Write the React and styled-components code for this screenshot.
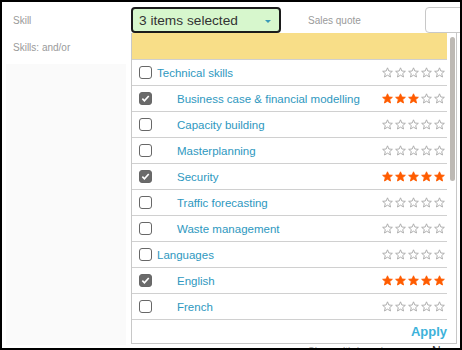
import React from 'react';
import styled, { createGlobalStyle } from 'styled-components';

const GlobalStyle = createGlobalStyle`
  body {
    margin: 0;
    background: #fff;
    font-family: "Liberation Sans", Arial, sans-serif;
  }
`;

const Frame = styled.div`
  width: 462px;
  height: 350px;
  box-sizing: border-box;
  border: 2px solid #000;
  padding: 5px 0 0 4px;
  display: flex;
  position: relative;
  overflow: hidden;
  background: #fff;
`;

const LeftCol = styled.div`
  width: 120px;
  flex-shrink: 0;
  display: flex;
  flex-direction: column;
  padding-bottom: 3px;
`;

const FieldLabel = styled.div`
  height: ${(p) => p.$h}px;
  display: flex;
  align-items: center;
  padding-left: 7px;
  font-size: 10px;
  color: #9a9a9a;
`;

const LeftPane = styled.div`
  flex: 1;
  margin-top: 3px;
  background: #fafafa;
`;

const Main = styled.div`
  flex: 1;
  min-width: 0;
  margin-left: 5px;
  display: flex;
  flex-direction: column;
`;

const TopRow = styled.div`
  display: flex;
  height: 26px;
`;

const ComboWrap = styled.div`
  position: relative;
  width: 150px;
  flex-shrink: 0;
`;

const Combo = styled.button`
  width: 100%;
  height: 100%;
  box-sizing: border-box;
  border: 2px solid #1b1b1b;
  border-radius: 4px;
  background: #d7f7cd;
  display: flex;
  align-items: center;
  justify-content: space-between;
  padding: 0 8px 0 6px;
  font-family: inherit;
  font-size: 13.7px;
  color: #333;
  cursor: pointer;
`;

const Caret = styled.span`
  width: 0;
  height: 0;
  margin-top: 2px;
  border-left: 3px solid transparent;
  border-right: 3px solid transparent;
  border-top: 3px solid #3a9ab8;
`;

const SideLabel = styled.div`
  width: 117px;
  margin-left: 27px;
  flex-shrink: 0;
  display: flex;
  align-items: center;
  font-size: 10px;
  color: #9a9a9a;
`;

const QuoteInput = styled.div`
  width: 50px;
  flex-shrink: 0;
  box-sizing: border-box;
  border: 1px solid #c8c8c8;
  border-radius: 4px;
  background: #fff;
`;

const BottomRow = styled.div`
  margin-top: auto;
  margin-left: 177px;
  margin-bottom: -12px;
  height: 18px;
  display: flex;
  align-items: center;
`;

const BottomLabel = styled.span`
  width: 124px;
  font-size: 10px;
  color: #9a9a9a;
`;

const BottomValue = styled.span`
  font-size: 12px;
  color: #333;
`;

const Panel = styled.div`
  position: absolute;
  top: 100%;
  left: 0;
  z-index: 10;
  width: 326px;
  height: 311px;
  box-sizing: border-box;
  border: 1px solid #c8c8c8;
  border-top: none;
  background: #fff;
  display: flex;
  flex-direction: column;
`;

const List = styled.div`
  height: 287px;
  flex-shrink: 0;
  display: flex;
  overflow: hidden;
`;

const ListBody = styled.div`
  flex: 1;
  min-width: 0;
`;

const Track = styled.div`
  width: 9px;
  flex-shrink: 0;
  box-sizing: border-box;
  padding: 4px 1px 0 3px;
`;

const Thumb = styled.div`
  height: 144px;
  border-radius: 3px;
  background: #bdb9b4;
`;

const Header = styled.div`
  height: 26px;
  background: #f8de88;
  border-bottom: 1px solid #cfcfcf;
`;

const Row = styled.div`
  height: 25px;
  border-bottom: 1px solid #d0d0d0;
  display: flex;
  align-items: center;
  padding: 0 2px 0 7px;
`;

const Box = styled.span`
  width: 13px;
  height: 13px;
  flex-shrink: 0;
  box-sizing: border-box;
  border: 1px solid #676767;
  border-radius: 3px;
  background: ${(p) => (p.$checked ? '#6a6a6a' : '#fff')};
  display: flex;
  align-items: center;
  justify-content: center;
`;

const ItemLabel = styled.span`
  flex: 1;
  margin-left: ${(p) => (p.$child ? 25 : 5)}px;
  font-size: 11.5px;
  color: #2e98c0;
  white-space: nowrap;
`;

const Stars = styled.span`
  display: flex;
  gap: 2px;
`;

const Footer = styled.div`
  flex: 1;
  display: flex;
  align-items: center;
  justify-content: flex-end;
  padding-right: 9px;
`;

const ApplyButton = styled.button`
  border: none;
  background: none;
  padding: 0;
  font-family: inherit;
  font-size: 13px;
  font-weight: bold;
  color: #3db2da;
  cursor: pointer;
`;

const items = [
  { name: 'Technical skills', parent: true },
  { name: 'Business case & financial modelling', checked: true, stars: 3 },
  { name: 'Capacity building' },
  { name: 'Masterplanning' },
  { name: 'Security', checked: true, stars: 5 },
  { name: 'Traffic forecasting' },
  { name: 'Waste management' },
  { name: 'Languages', parent: true },
  { name: 'English', checked: true, stars: 5 },
  { name: 'French' },
];

function Star({ filled }) {
  return (
    <svg width="11" height="11" viewBox="0 0 24 24">
      <path
        d="M12 1.8l3 7 7.6.6-5.8 5 1.8 7.4L12 17.8l-6.6 4 1.8-7.4-5.8-5 7.6-.6z"
        fill={filled ? '#ff5c00' : '#fff'}
        stroke={filled ? '#ff5c00' : '#a9a9a9'}
        strokeWidth="2"
        strokeLinejoin="round"
      />
    </svg>
  );
}

function Check() {
  return (
    <svg width="9" height="9" viewBox="0 0 10 10">
      <path d="M1.5 5.2l2.3 2.4L8.6 2.2" fill="none" stroke="#fff" strokeWidth="1.8" />
    </svg>
  );
}

export default function App() {
  return (
    <>
      <GlobalStyle />
      <Frame>
        <LeftCol>
          <FieldLabel $h={26}>Skill</FieldLabel>
          <FieldLabel $h={28}>Skills: and/or</FieldLabel>
          <LeftPane />
        </LeftCol>
        <Main>
          <TopRow>
            <ComboWrap>
              <Combo>
                3 items selected
                <Caret />
              </Combo>
              <Panel>
                <List>
                  <ListBody>
                    <Header />
                    {items.map((it) => (
                      <Row key={it.name}>
                        <Box $checked={it.checked}>{it.checked && <Check />}</Box>
                        <ItemLabel $child={!it.parent}>{it.name}</ItemLabel>
                        <Stars>
                          {[1, 2, 3, 4, 5].map((n) => (
                            <Star key={n} filled={n <= (it.stars || 0)} />
                          ))}
                        </Stars>
                      </Row>
                    ))}
                  </ListBody>
                  <Track>
                    <Thumb />
                  </Track>
                </List>
                <Footer>
                  <ApplyButton>Apply</ApplyButton>
                </Footer>
              </Panel>
            </ComboWrap>
            <SideLabel>Sales quote</SideLabel>
            <QuoteInput />
          </TopRow>
          <BottomRow>
            <BottomLabel>Show withdrawals</BottomLabel>
            <BottomValue>No</BottomValue>
          </BottomRow>
        </Main>
      </Frame>
    </>
  );
}
